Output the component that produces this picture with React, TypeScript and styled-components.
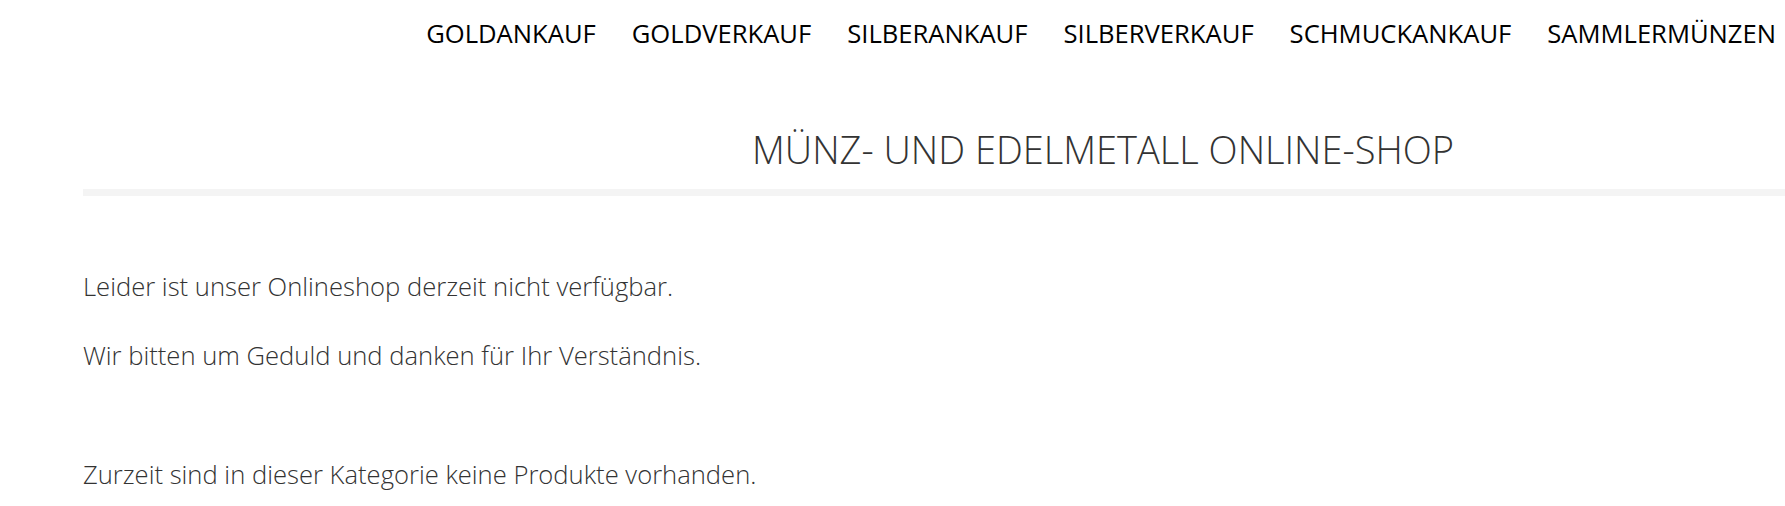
import styled, { createGlobalStyle } from "styled-components";

const GlobalStyle = createGlobalStyle`
    html, body {
        margin: 0;
        padding: 0;
        background: #ffffff;
        overflow: hidden;
    }
    body {
        font-family: "Open Sans", "Liberation Sans", sans-serif;
    }
`;

const Header = styled.header`
    display: flex;
    justify-content: flex-end;
    padding: 16px 9px 0 0;
`;
const Nav = styled.nav`
    display: flex;
    gap: 36px;
`;
const NavLink = styled.a`
    font-size: 25.6px;
    line-height: 36px;
    font-weight: 400;
    color: #000;
    text-decoration: none;
    text-transform: uppercase;
    white-space: nowrap;
`;
const Main = styled.main`
    padding-left: 83px;
`;
const Title = styled.h1`
    margin: 74px 0 0;
    padding-left: 669px;
    font-size: 38px;
    line-height: 46px;
    font-weight: 300;
    color: #333;
    white-space: nowrap;
`;
const Rule = styled.div`
    height: 7px;
    margin-top: 17px;
    background: #f4f4f4;
`;
const Content = styled.div`
    padding-top: 73px;
`;
const Text = styled.p<{ $gap?: number }>`
    margin: ${(p) => p.$gap ?? 0}px 0 0;
    font-size: 25.6px;
    line-height: 36px;
    font-weight: 300;
    color: #333;
`;

const links = [
    "Goldankauf",
    "Goldverkauf",
    "Silberankauf",
    "Silberverkauf",
    "Schmuckankauf",
    "Sammlermünzen",
];

export default function App() {
    return (
        <>
            <GlobalStyle />
            <Header>
                <Nav>
                    {links.map((item) => (
                        <NavLink key={item} href="#">{item}</NavLink>
                    ))}
                </Nav>
            </Header>
            <Main>
                <Title>MÜNZ- UND EDELMETALL ONLINE-SHOP</Title>
                <Rule />
                <Content>
                    <Text>Leider ist unser Onlineshop derzeit nicht verfügbar.</Text>
                    <Text $gap={33}>Wir bitten um Geduld und danken für Ihr Verständnis.</Text>
                    <Text $gap={83}>Zurzeit sind in dieser Kategorie keine Produkte vorhanden.</Text>
                </Content>
            </Main>
        </>
    );
}
